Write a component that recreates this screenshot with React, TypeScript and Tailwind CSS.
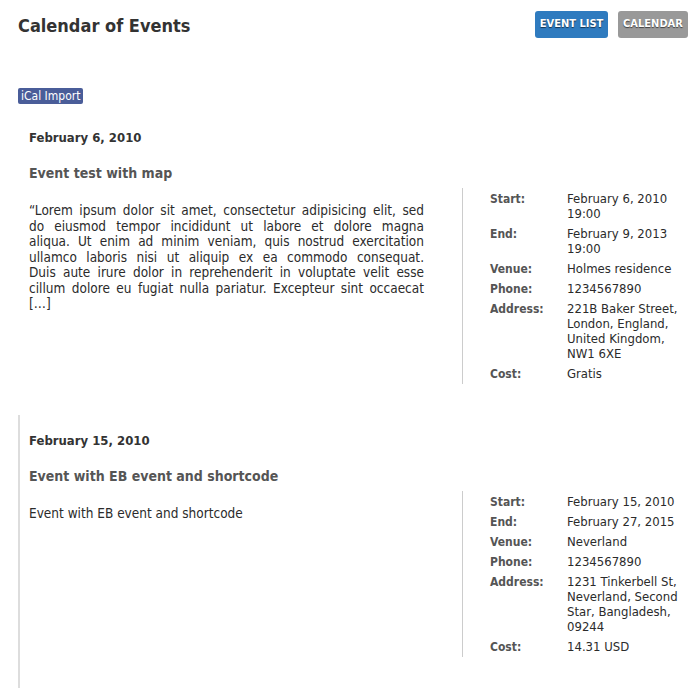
type Row = { label: string; lines: string[] };

type Ev = {
  date: string;
  title: string;
  desc: string[];
  rows: Row[];
  bordered: boolean;
};

const events: Ev[] = [
  {
    date: "February 6, 2010",
    title: "Event test with map",
    desc: [
      "“Lorem ipsum dolor sit amet, consectetur adipisicing elit, sed",
      "do eiusmod tempor incididunt ut labore et dolore magna",
      "aliqua. Ut enim ad minim veniam, quis nostrud exercitation",
      "ullamco laboris nisi ut aliquip ex ea commodo consequat.",
      "Duis aute irure dolor in reprehenderit in voluptate velit esse",
      "cillum dolore eu fugiat nulla pariatur. Excepteur sint occaecat",
      "[…]",
    ],
    bordered: false,
    rows: [
      { label: "Start:", lines: ["February 6, 2010", "19:00"] },
      { label: "End:", lines: ["February 9, 2013", "19:00"] },
      { label: "Venue:", lines: ["Holmes residence"] },
      { label: "Phone:", lines: ["1234567890"] },
      { label: "Address:", lines: ["221B Baker Street,", "London, England,", "United Kingdom,", "NW1 6XE"] },
      { label: "Cost:", lines: ["Gratis"] },
    ],
  },
  {
    date: "February 15, 2010",
    title: "Event with EB event and shortcode",
    desc: ["Event with EB event and shortcode"],
    bordered: true,
    rows: [
      { label: "Start:", lines: ["February 15, 2010"] },
      { label: "End:", lines: ["February 27, 2015"] },
      { label: "Venue:", lines: ["Neverland"] },
      { label: "Phone:", lines: ["1234567890"] },
      { label: "Address:", lines: ["1231 Tinkerbell St,", "Neverland, Second", "Star, Bangladesh,", "09244"] },
      { label: "Cost:", lines: ["14.31 USD"] },
    ],
  },
];

function Event({ ev }: { ev: Ev }) {
  return (
    <div
      className={
        "border-l-2 pl-[9px] pt-[18px] pb-[31px] " +
        (ev.bordered ? "border-[#dddddd]" : "border-transparent")
      }
    >
      <div className="text-[13px] font-bold leading-[16px] text-[#333333]">{ev.date}</div>
      <div className="mt-[18px] text-[14px] font-bold leading-[18px] text-[#555555]">{ev.title}</div>
      <div className="mt-[6px] flex items-start">
        <div className="w-[395px] shrink-0 pt-[15px]">
          <div className="text-[13.5px] leading-[15.5px] text-[#2b2b2b]">
            {ev.desc.map((line, i) => (
              <div
                key={i}
                className={
                  i < ev.desc.length - 1
                    ? "whitespace-nowrap text-justify [text-align-last:justify]"
                    : "whitespace-nowrap"
                }
              >
                {line}
              </div>
            ))}
          </div>
        </div>
        <div className="ml-[38px] flex flex-1 flex-col gap-[5px] border-l border-[#cccccc] pb-[3px] pl-[27px] pt-[3px]">
          {ev.rows.map((r) => (
            <div key={r.label} className="flex leading-[15px]">
              <div className="w-[77px] shrink-0 pt-px text-[12px] leading-[14px] font-bold text-[#555555]">
                {r.label}
              </div>
              <div className="text-[13px] leading-[15px] text-[#2b2b2b]">
                {r.lines.map((l) => (
                  <div key={l}>{l}</div>
                ))}
              </div>
            </div>
          ))}
        </div>
      </div>
    </div>
  );
}

export default function App() {
  return (
    <div
      className="min-h-[700px] bg-white pl-[18px] pr-[12px] text-[#333333]"
      style={{ fontFamily: '"DejaVu Sans Condensed", "DejaVu Sans", sans-serif' }}
    >
      <div className="flex items-start justify-between pt-[11px]">
        <h1 className="mt-[3px] text-[18px] font-bold leading-[24px] text-[#333333]">Calendar of Events</h1>
        <div className="flex gap-[10px]">
          <button className="h-[27px] w-[73px] rounded-[3px] bg-[#2f7bbf] text-[11px] font-bold text-white [text-shadow:0_1px_1px_rgba(0,0,0,0.6)]">
            EVENT LIST
          </button>
          <button className="h-[27px] w-[70px] rounded-[3px] bg-[#999999] text-[11px] font-bold text-white [text-shadow:0_1px_1px_rgba(0,0,0,0.6)]">
            CALENDAR
          </button>
        </div>
      </div>
      <div className="mt-[50px] flex">
        <span className="rounded-[2px] bg-[#4a5d99] px-[3px] text-[12px] leading-[16px] text-white">
          iCal Import
        </span>
      </div>
      <div className="mt-[8px] flex flex-col">
        {events.map((ev) => (
          <Event key={ev.date} ev={ev} />
        ))}
      </div>
    </div>
  );
}
